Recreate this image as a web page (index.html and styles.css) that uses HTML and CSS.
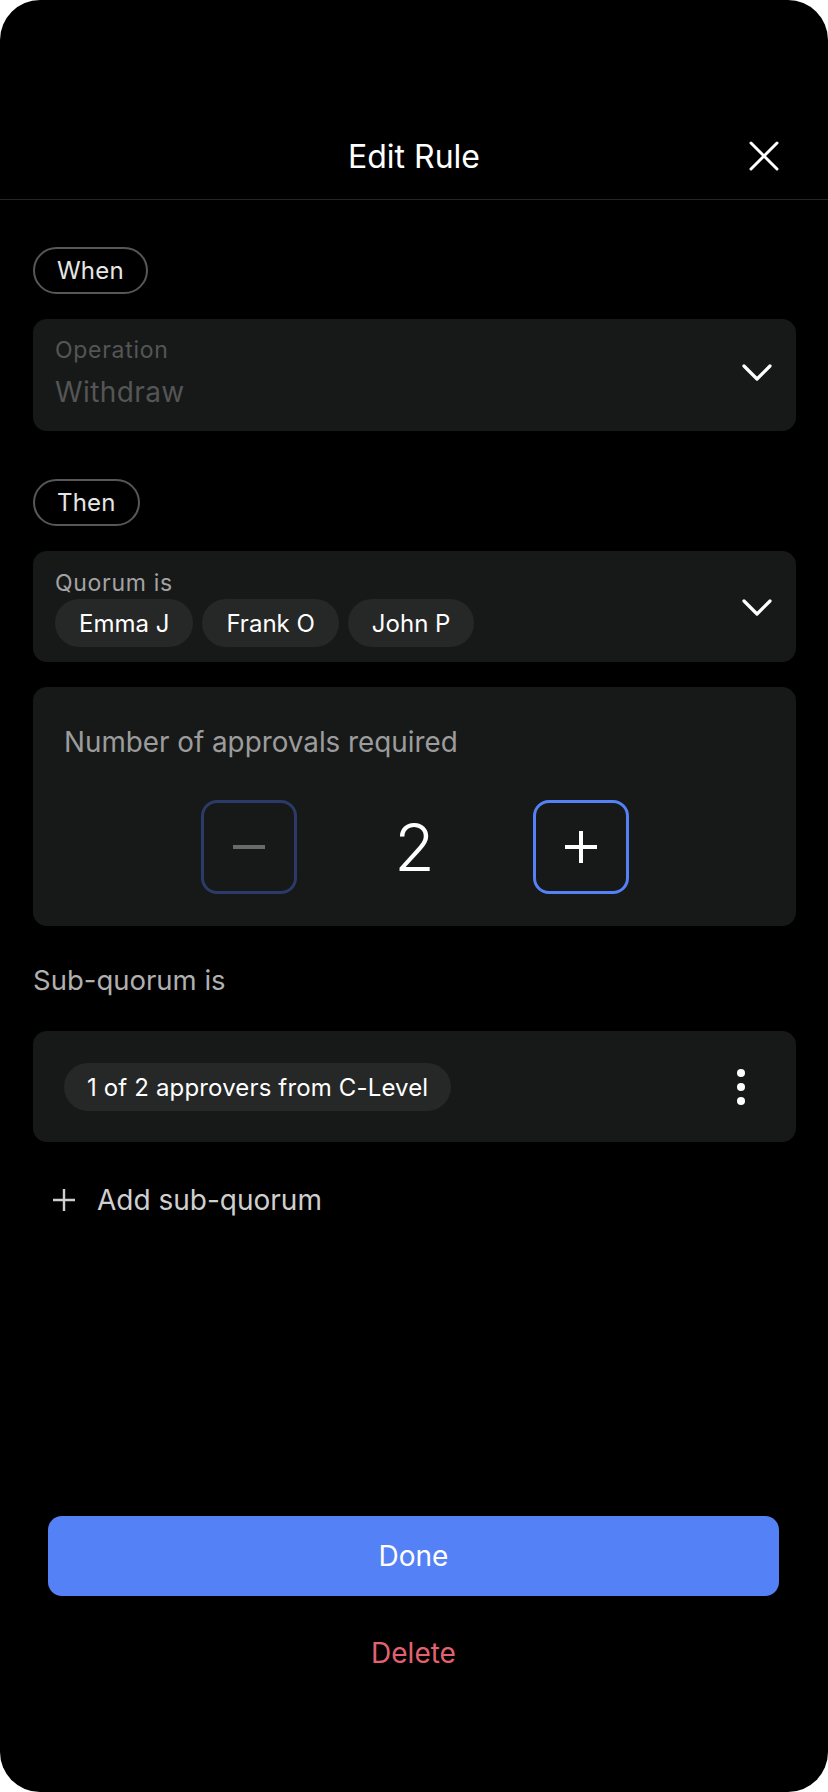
FILE: index.html
```html
<!DOCTYPE html>
<html lang="en">

<head>
    <meta charset="UTF-8">
    <meta name="viewport" content="width=device-width, initial-scale=1.0">
    <title>Edit Rule</title>
    <link rel="stylesheet" href="styles.css">
</head>

<body>

    <div class="screen">
        <header class="sheet-header">
            <span></span>
            <h1>Edit Rule</h1>
            <button class="close-btn" aria-label="Close">
                <svg width="30" height="30" viewBox="0 0 30 30" fill="none" stroke="#fff" stroke-width="3" stroke-linecap="round">
                    <path d="M2 2 L28 28 M28 2 L2 28" />
                </svg>
            </button>
        </header>

        <main class="content">
            <span class="step-pill">When</span>

            <div class="select-card">
                <div class="select-body">
                    <div class="select-label muted">Operation</div>
                    <div class="select-value">Withdraw</div>
                </div>
                <svg class="chevron" width="30" height="18" viewBox="0 0 30 18" fill="none" stroke="#fff" stroke-width="3.2" stroke-linecap="round" stroke-linejoin="round">
                    <path d="M2 2 L15 15 L28 2" />
                </svg>
            </div>

            <span class="step-pill">Then</span>

            <div class="select-card quorum-card">
                <div class="select-body">
                    <div class="select-label">Quorum is</div>
                    <div class="chip-row">
                        <span class="chip">Emma J</span>
                        <span class="chip">Frank O</span>
                        <span class="chip">John P</span>
                    </div>
                </div>
                <svg class="chevron" width="30" height="18" viewBox="0 0 30 18" fill="none" stroke="#fff" stroke-width="3.2" stroke-linecap="round" stroke-linejoin="round">
                    <path d="M2 2 L15 15 L28 2" />
                </svg>
            </div>

            <div class="approvals-card">
                <div class="approvals-label">Number of approvals required</div>
                <div class="stepper">
                    <button class="step-btn step-btn-disabled" aria-label="Decrease">
                        <svg width="32" height="32" viewBox="0 0 32 32" stroke="#6a6a6a" stroke-width="4">
                            <path d="M0 16 H32" />
                        </svg>
                    </button>
                    <span class="step-value">2</span>
                    <button class="step-btn" aria-label="Increase">
                        <svg width="32" height="32" viewBox="0 0 32 32" stroke="#fff" stroke-width="4">
                            <path d="M0 16 H32 M16 0 V32" />
                        </svg>
                    </button>
                </div>
            </div>

            <div class="section-label">Sub-quorum is</div>

            <div class="sub-card">
                <span class="chip chip-wide">1 of 2 approvers from C-Level</span>
                <button class="kebab" aria-label="More">
                    <svg width="8" height="36" viewBox="0 0 8 36" fill="#fff">
                        <circle cx="4" cy="4" r="4" />
                        <circle cx="4" cy="18" r="4" />
                        <circle cx="4" cy="32" r="4" />
                    </svg>
                </button>
            </div>

            <div class="add-row">
                <svg width="22" height="22" viewBox="0 0 22 22" stroke="#cfcfcf" stroke-width="2.4">
                    <path d="M0 11 H22 M11 0 V22" />
                </svg>
                <span>Add sub-quorum</span>
            </div>
        </main>

        <footer class="sheet-footer">
            <button class="done-btn">Done</button>
            <button class="delete-btn">Delete</button>
        </footer>
    </div>

</body>

</html>
```

FILE: styles.css
```css
:root {
    --primary-color: #5581f6;
    --bg-color: #000;
    --card-bg: #171919;
    --chip-bg: #262727;
    --text-color: #fff;
    --muted-text: #a3a3a3;
    --danger-color: #e2636f;
}

body {
    margin: 0;
    background-color: #fff;
    font-family: "Inter", "Noto Sans", sans-serif;
    color: var(--text-color);
}

button {
    font-family: inherit;
    border: none;
    background: none;
    padding: 0;
    cursor: pointer;
}

.screen {
    width: 828px;
    height: 1792px;
    background-color: var(--bg-color);
    border-radius: 40px;
    display: flex;
    flex-direction: column;
    overflow: hidden;
}

.sheet-header {
    height: 200px;
    box-sizing: border-box;
    padding: 130px 49px 0 49px;
    display: grid;
    grid-template-columns: 1fr auto 1fr;
    align-items: start;
    border-bottom: 1px solid #262626;
}

.sheet-header h1 {
    margin: 0;
    font-size: 32px;
    font-weight: 400;
    line-height: 54px;
}

.close-btn {
    justify-self: end;
    margin-top: 11px;
    width: 30px;
    height: 30px;
    display: flex;
}

.content {
    padding: 47px 32px 0 33px;
    display: flex;
    flex-direction: column;
    align-items: flex-start;
}

.step-pill {
    height: 47px;
    box-sizing: border-box;
    border: 2.5px solid #575757;
    border-radius: 24px;
    padding: 0 22px;
    display: flex;
    align-items: center;
    font-size: 24px;
    letter-spacing: 0.2px;
    color: #e6e6e6;
}

.select-card {
    align-self: stretch;
    margin-top: 25px;
    margin-bottom: 48px;
    background-color: var(--card-bg);
    border-radius: 14px;
    padding: 17px 24px 21px 22px;
    display: flex;
    align-items: center;
    justify-content: space-between;
}

.select-label {
    font-size: 23px;
    letter-spacing: 0.7px;
    line-height: 28px;
    color: var(--muted-text);
}

.select-label.muted {
    color: #555;
}

.select-value {
    margin-top: 10px;
    font-size: 28px;
    letter-spacing: 0.4px;
    line-height: 36px;
    color: #555;
}

.quorum-card {
    margin-bottom: 25px;
    padding: 18px 24px 15px 22px;
}

.chip-row {
    margin-top: 2px;
    display: flex;
    gap: 9px;
}

.chip {
    height: 48px;
    box-sizing: border-box;
    padding: 0 24px;
    border-radius: 24px;
    background-color: var(--chip-bg);
    display: flex;
    align-items: center;
    font-size: 24px;
    color: #fff;
}

.chip-wide {
    padding: 0 23px;
    letter-spacing: 0.15px;
}

.approvals-card {
    align-self: stretch;
    background-color: var(--card-bg);
    border-radius: 14px;
    padding: 39px 31px 32px 31px;
}

.approvals-label {
    font-size: 27.8px;
    line-height: 32px;
    color: #9c9c9c;
}

.stepper {
    margin-top: 42px;
    display: flex;
    justify-content: center;
    align-items: center;
    gap: 48px;
}

.step-btn {
    width: 96px;
    height: 94px;
    box-sizing: border-box;
    border: 3.5px solid var(--primary-color);
    border-radius: 16px;
    display: flex;
    align-items: center;
    justify-content: center;
}

.step-btn-disabled {
    border-color: #2b3a69;
}

.step-value {
    width: 140px;
    text-align: center;
    font-size: 66px;
    font-weight: 300;
    line-height: 80px;
}

.section-label {
    margin-top: 38px;
    font-size: 27.5px;
    line-height: 32px;
    color: #b0b0b0;
}

.sub-card {
    align-self: stretch;
    margin-top: 35px;
    background-color: var(--card-bg);
    border-radius: 14px;
    padding: 32px 51px 31px 31px;
    display: flex;
    align-items: center;
    justify-content: space-between;
}

.kebab {
    display: flex;
}

.add-row {
    margin-top: 42px;
    padding-left: 20px;
    display: flex;
    align-items: center;
    gap: 22px;
    font-size: 28px;
    line-height: 32px;
    color: #cfcfcf;
}

.sheet-footer {
    margin-top: auto;
    padding: 0 49px 122px 48px;
    display: flex;
    flex-direction: column;
    align-items: center;
}

.done-btn {
    width: 100%;
    height: 80px;
    border-radius: 14px;
    background-color: var(--primary-color);
    color: #fff;
    font-size: 28px;
}

.delete-btn {
    margin-top: 40px;
    font-size: 28px;
    line-height: 34px;
    color: var(--danger-color);
}
```
